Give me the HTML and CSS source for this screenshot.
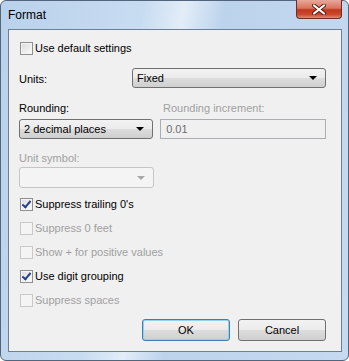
FILE: index.html
```html
<!DOCTYPE html>
<html lang="en">
<head>
    <meta charset="UTF-8">
    <title>Format</title>
    <link rel="stylesheet" href="styles.css">
</head>
<body>
    <div class="window">
        <div class="titlebar">
            <span class="title">Format</span>
            <div class="close-btn">
                <svg width="14" height="11" viewBox="0 0 14 11">
                    <path d="M2 1.5 L12 9.5 M12 1.5 L2 9.5" stroke="#5a1a12" stroke-width="4" stroke-linecap="round"/>
                    <path d="M2 1.5 L12 9.5 M12 1.5 L2 9.5" stroke="#ffffff" stroke-width="2.2" stroke-linecap="round"/>
                </svg>
            </div>
        </div>

        <div class="client">
            <!-- Default settings -->
            <label class="check row-first">
                <span class="box"></span>
                <span>Use default settings</span>
            </label>

            <div class="units-row">
                <span class="label">Units:</span>
                <div class="combo units-combo">
                    <span>Fixed</span>
                    <span class="arrow"></span>
                </div>
            </div>

            <div class="pair labels">
                <span class="label">Rounding:</span>
                <span class="label disabled">Rounding increment:</span>
            </div>
            <div class="pair">
                <div class="combo">
                    <span>2 decimal places</span>
                    <span class="arrow"></span>
                </div>
                <div class="textbox disabled">0.01</div>
            </div>

            <div class="label disabled symbol-label">Unit symbol:</div>
            <div class="combo combo-off">
                <span></span>
                <span class="arrow"></span>
            </div>

            <!-- Options -->
            <div class="options">
                <label class="check"><span class="box checked"></span><span>Suppress trailing 0's</span></label>
                <label class="check disabled"><span class="box"></span><span>Suppress 0 feet</span></label>
                <label class="check disabled"><span class="box"></span><span>Show + for positive values</span></label>
                <label class="check"><span class="box checked"></span><span>Use digit grouping</span></label>
                <label class="check disabled"><span class="box"></span><span>Suppress spaces</span></label>
            </div>

            <div class="buttons">
                <button class="btn default">OK</button>
                <button class="btn">Cancel</button>
            </div>
        </div>
    </div>
</body>
</html>
```

FILE: styles.css
```css
body {
    margin: 0;
    font-family: "Liberation Sans", Arial, sans-serif;
    font-size: 11px;
    color: #000;
}
.window {
    width: 349px;
    height: 361px;
    box-sizing: border-box;
    border: 1px solid #53657c;
    border-radius: 6px;
    background: linear-gradient(100deg, #b9d1ea 0%, #c8dcf1 35%, #e2edf8 45%, #bcd3ec 55%, #c6daf0 100%);
    padding: 0 6px 8px 7px;
    display: flex;
    flex-direction: column;
}
.titlebar {
    height: 28px;
    display: flex;
    justify-content: space-between;
    align-items: flex-start;
}
.title {
    font-size: 12px;
    margin-top: 7px;
    color: #000;
}
.close-btn {
    width: 44px;
    height: 18px;
    margin-top: -1px;
    border: 1px solid #6b2d24;
    border-top: none;
    border-radius: 0 0 4px 4px;
    background: linear-gradient(#e9a99a 0%, #d9745f 45%, #c2361c 55%, #c8482c 80%, #e08c6f 100%);
    display: flex;
    align-items: center;
    justify-content: center;
}
.client {
    flex: 1;
    border: 1px solid #6f7f93;
    background: #f0f0f0;
    padding: 9px 15px 0 10px;
    display: flex;
    flex-direction: column;
}
.label {
    display: block;
    line-height: 14px;
}
.disabled {
    color: #a0a0a0;
}
.check {
    display: flex;
    align-items: center;
    height: 18px;
    padding-left: 1px;
}
.box {
    width: 11px;
    height: 11px;
    border: 1px solid #8e8f8f;
    background: linear-gradient(135deg, #dcdcdc, #fbfbfb);
    margin-right: 2px;
    box-shadow: inset 0 0 0 1px #f4f4f4;
    position: relative;
}
.check.disabled .box {
    border-color: #c9c9c9;
    background: #f4f4f4;
}
.box.checked::after {
    content: "";
    position: absolute;
    left: 3px;
    top: 0px;
    width: 3px;
    height: 7px;
    border: solid #2b3f8f;
    border-width: 0 2px 2px 0;
    transform: rotate(40deg);
}
.units-row {
    display: flex;
    align-items: center;
    margin-top: 11px;
}
.units-row .label {
    width: 115px;
    padding-top: 2px;
}
.combo {
    box-sizing: border-box;
    height: 20px;
    width: 135px;
    border: 1px solid #707070;
    border-radius: 3px;
    background: linear-gradient(#f2f2f2 0%, #ebebeb 50%, #dddddd 50%, #cfcfcf 100%);
    display: flex;
    align-items: center;
    justify-content: space-between;
    padding: 0 8px 0 4px;
}
.units-combo {
    width: 197px;
}
.arrow {
    width: 0;
    height: 0;
    border-left: 4px solid transparent;
    border-right: 4px solid transparent;
    border-top: 4px solid #000;
}
.combo-off {
    border-color: #c5c5c5;
    background: #f4f4f4;
    height: 21px;
    margin-top: 2px;
}
.combo-off .arrow {
    border-top-color: #a8a8a8;
}
.pair {
    display: flex;
    gap: 7px;
}
.pair.labels {
    margin-top: 13px;
    gap: 0;
}
.pair.labels .label:first-child {
    width: 144px;
}
.pair .combo {
    margin-top: 4px;
}
.textbox {
    box-sizing: border-box;
    margin-top: 4px;
    height: 20px;
    width: 167px;
    border: 1px solid #a9aeb3;
    background: #f0f0f0;
    padding: 3px 0 0 5px;
    color: #6d6d6d;
}
.symbol-label {
    margin-top: 12px;
}
.options {
    display: flex;
    flex-direction: column;
    gap: 6px;
    margin-top: 7px;
}
.buttons {
    display: flex;
    justify-content: flex-end;
    gap: 8px;
    margin-top: 10px;
}
.btn {
    width: 88px;
    height: 22px;
    font-family: inherit;
    font-size: 11px;
    border: 1px solid #707070;
    border-radius: 3px;
    background: linear-gradient(#f2f2f2 0%, #ebebeb 50%, #dddddd 50%, #cfcfcf 100%);
    padding: 0;
    color: #000;
}
.btn.default {
    border-color: #3c7fb1;
    box-shadow: inset 0 0 0 1px #95d0ed;
}
```
